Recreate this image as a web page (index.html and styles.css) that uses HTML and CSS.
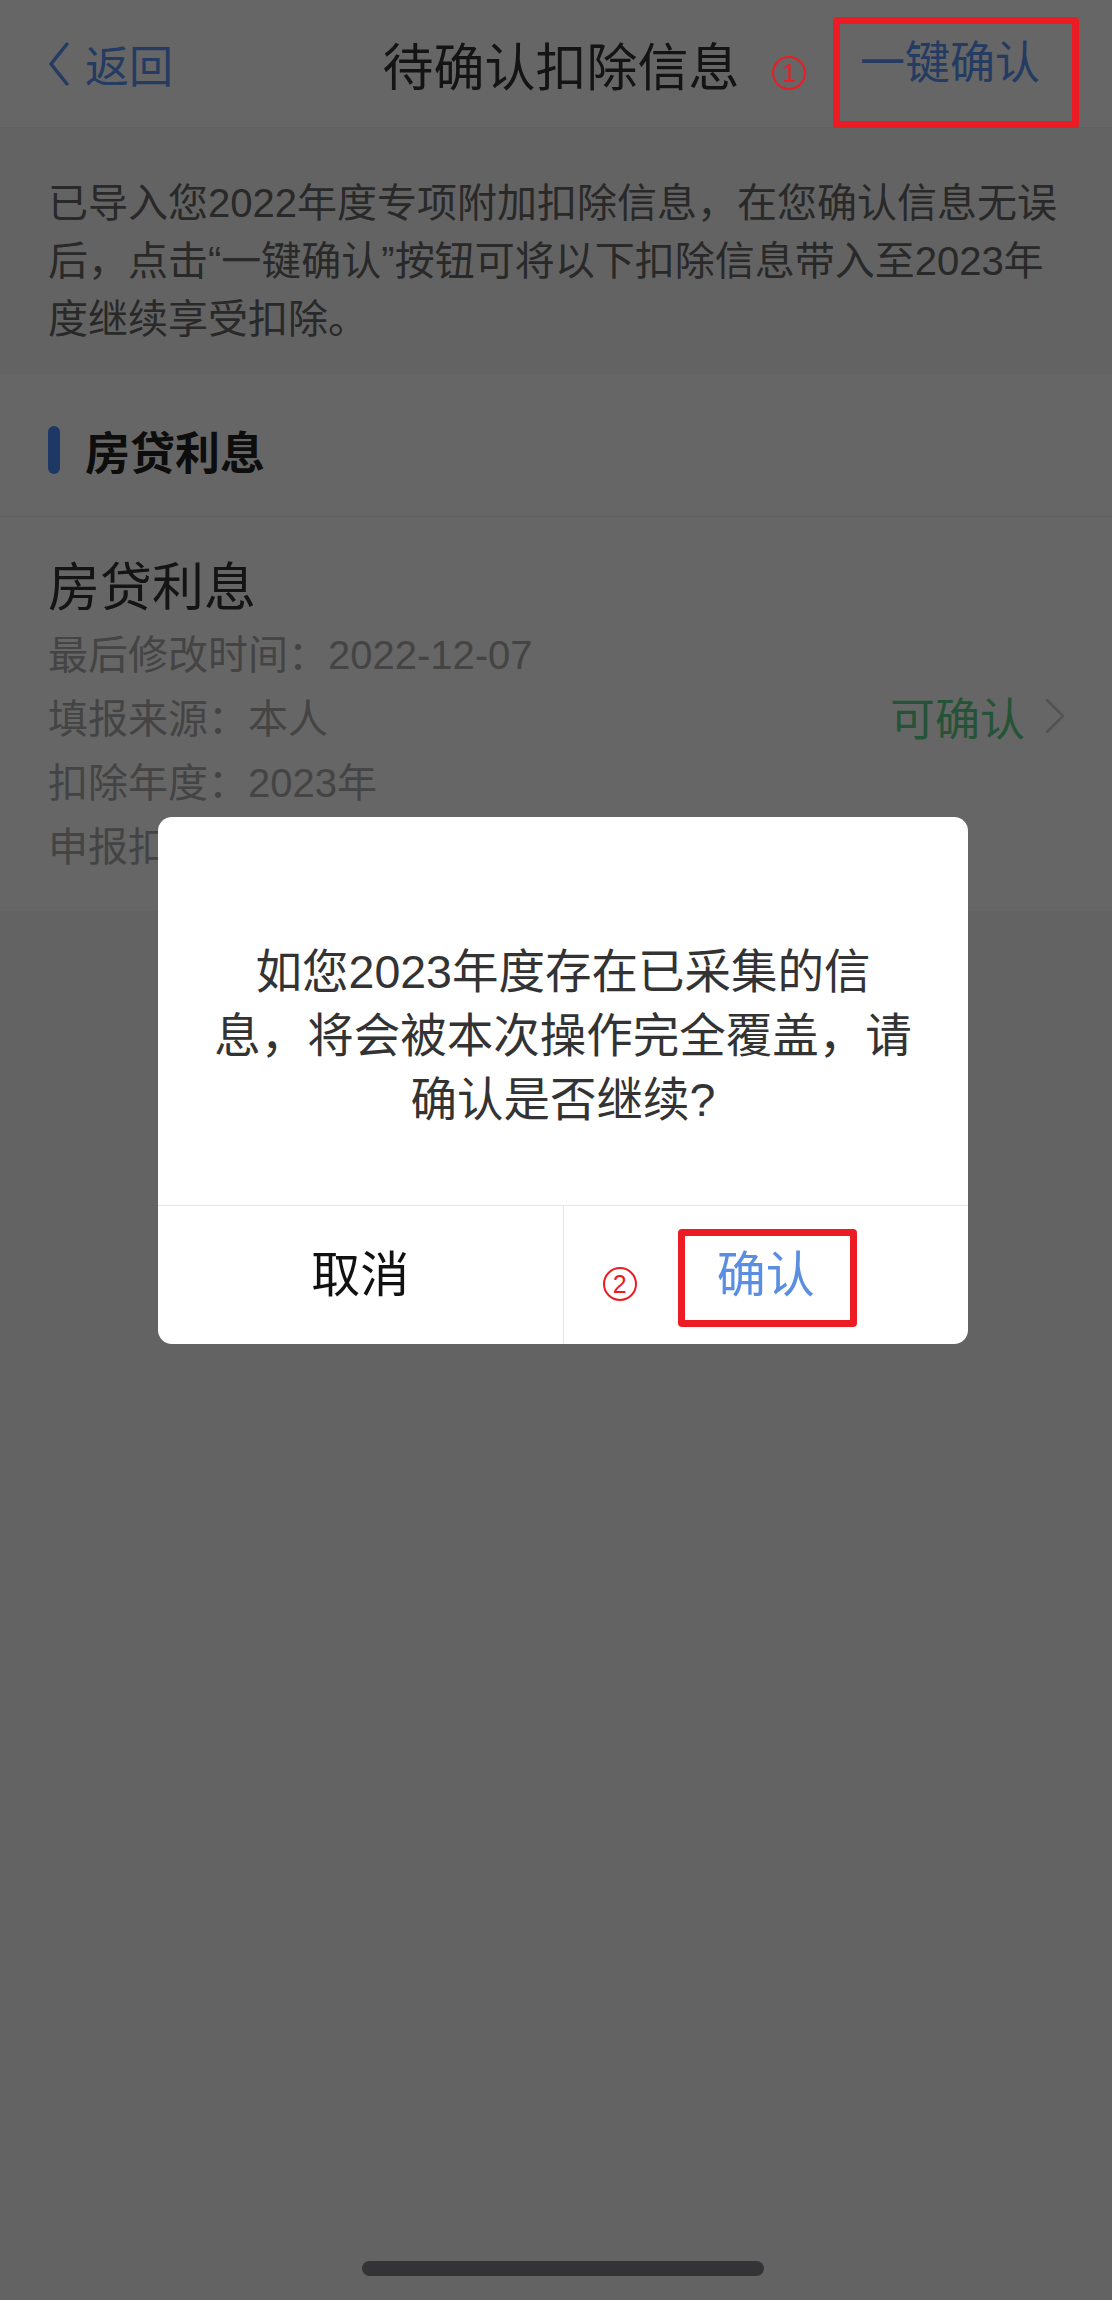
FILE: index.html
```html
<!DOCTYPE html>
<html lang="zh-CN">
<head>
    <meta charset="UTF-8">
    <meta name="viewport" content="width=device-width, initial-scale=1.0">
    <title>待确认扣除信息</title>
    <link rel="stylesheet" href="styles.css">
</head>
<body>
    <div class="nav">
        <a class="back" href="#">
            <svg viewBox="0 0 22 44" width="22" height="44"><polyline points="19,2 3,22 19,42" fill="none" stroke="currentColor" stroke-width="3.5" stroke-linecap="round" stroke-linejoin="round"/></svg>
            <span>返回</span>
        </a>
        <div class="title">待确认扣除信息</div>
        <div class="nav-right">
            <span class="confirm-all step step-nav" data-step="1">一键确认</span>
        </div>
    </div>

    <p class="intro">已导入您2022年度专项附加扣除信息，在您确认信息无误后，点击“一键确认”按钮可将以下扣除信息带入至2023年度继续享受扣除。</p>

    <div class="section-head">
        <span class="section-bar"></span>
        <span>房贷利息</span>
    </div>

    <div class="item">
        <div class="item-info">
            <div class="item-title">房贷利息</div>
            <div class="item-row">最后修改时间：2022-12-07</div>
            <div class="item-row">填报来源：本人</div>
            <div class="item-row">扣除年度：2023年</div>
            <div class="item-row">申报扣除比例：100%</div>
        </div>
        <div class="item-status">
            <span>可确认</span>
            <svg viewBox="0 0 22 36" width="22" height="36"><polyline points="3,2 19,18 3,34" fill="none" stroke="currentColor" stroke-width="2.5" stroke-linecap="round" stroke-linejoin="round"/></svg>
        </div>
    </div>

    <!-- 弹窗 -->
    <div class="mask"></div>
    <div class="dialog">
        <div class="dialog-msg">如您2023年度存在已采集的信<br>息，将会被本次操作完全覆盖，请<br>确认是否继续?</div>
        <div class="dialog-btns">
            <div class="dialog-btn cancel">取消</div>
            <div class="dialog-btn ok"><span class="step step-dialog" data-step="2">确认</span></div>
        </div>
    </div>

    <div class="home-bar"></div>
</body>
</html>
```

FILE: styles.css
```css
body {
    font-family: "Liberation Sans", "Noto Sans CJK SC", sans-serif;
    background-color: #f7f7f7;
    margin: 0;
    min-height: 2300px;
    position: relative;
}
.nav {
    height: 128px;
    box-sizing: border-box;
    background: #fff;
    border-bottom: 1px solid #f0f0f0;
    padding: 0 38px 0 48px;
    display: grid;
    grid-template-columns: 1fr auto 1fr;
    align-items: center;
}
.back {
    display: flex;
    align-items: center;
    gap: 15px;
    color: #5b93f5;
    font-size: 44px;
    text-decoration: none;
    justify-self: start;
}
.back svg {
    display: block;
}
.title {
    font-size: 51px;
    color: #333;
    white-space: nowrap;
}
.nav-right {
    justify-self: end;
    padding-right: 34px;
}
.confirm-all {
    display: block;
    font-size: 45px;
    line-height: 54px;
    color: #5b93f5;
    white-space: nowrap;
}

/* 标注框和序号 */
.step {
    position: relative;
}
.step::after {
    content: "";
    position: absolute;
    border: 7px solid #ec1c24;
    border-radius: 4px;
    z-index: 30;
}
.step::before {
    content: attr(data-step);
    position: absolute;
    width: 34px;
    height: 34px;
    box-sizing: border-box;
    border: 2px solid #ec1c24;
    border-radius: 50%;
    color: #ec1c24;
    font-family: "Liberation Sans", sans-serif;
    font-size: 25px;
    line-height: 30px;
    text-align: center;
    z-index: 30;
}
.step-nav::after {
    top: -20px;
    bottom: -37px;
    left: -27px;
    right: -39px;
}
.step-nav::before {
    left: -88px;
    top: 19px;
}
.step-dialog::after {
    top: -17px;
    bottom: -22px;
    left: -39px;
    right: -42px;
}
.step-dialog::before {
    left: -114px;
    top: 21px;
}

.intro {
    margin: 0;
    padding: 46px 48px 26px;
    font-size: 40px;
    line-height: 58px;
    color: #666;
}
.section-head {
    height: 143px;
    box-sizing: border-box;
    padding: 10px 48px 0;
    background: #fff;
    border-bottom: 1px solid #eee;
    display: flex;
    align-items: center;
    gap: 25px;
    font-size: 45px;
    font-weight: bold;
    color: #222;
}
.section-bar {
    width: 12px;
    height: 48px;
    border-radius: 6px;
    background: #4d8cff;
}
.item {
    background: #fff;
    padding: 36px 46px 32px 48px;
    display: flex;
    align-items: center;
    justify-content: space-between;
}
.item-title {
    font-size: 52px;
    line-height: 70px;
    color: #333;
}
.item-row {
    font-size: 40px;
    line-height: 64px;
    color: #aaa;
}
.item-status {
    display: flex;
    align-items: center;
    gap: 19px;
    font-size: 45px;
    color: #5ccf8a;
}
.item-status svg {
    color: #d0d0d0;
}

.mask {
    position: fixed;
    top: 0;
    left: 0;
    right: 0;
    bottom: 0;
    background: rgba(0, 0, 0, 0.6);
    z-index: 10;
}
.dialog {
    position: absolute;
    top: 817px;
    left: 158px;
    width: 810px;
    background: #fff;
    border-radius: 14px;
    z-index: 20;
}
.dialog-msg {
    padding: 123px 30px 73px;
    text-align: center;
    font-size: 46.5px;
    line-height: 64px;
    color: #333;
}
.dialog-btns {
    display: flex;
    height: 139px;
    box-sizing: border-box;
    border-top: 1px solid #e5e5e5;
}
.dialog-btn {
    flex: 1;
    display: flex;
    align-items: center;
    justify-content: center;
    font-size: 49px;
    line-height: 59px;
}
.dialog-btn + .dialog-btn {
    border-left: 1px solid #e5e5e5;
}
.cancel {
    color: #111;
}
.ok {
    color: #5a8ee0;
}
.home-bar {
    position: absolute;
    left: 362px;
    top: 2261px;
    width: 402px;
    height: 15px;
    border-radius: 8px;
    background: #343436;
    z-index: 30;
}
```
